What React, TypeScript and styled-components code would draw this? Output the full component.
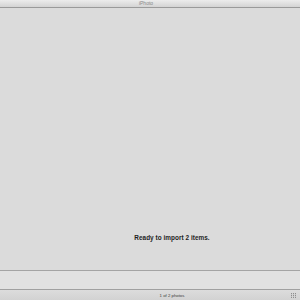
import React from 'react'
import styled, { createGlobalStyle } from 'styled-components'

const Global = createGlobalStyle`
  html, body { margin: 0; padding: 0; }
  body { width: 300px; height: 300px; overflow: hidden; font-family: "Liberation Sans", Arial, sans-serif; }
`

const Window = styled.div`
  width: 300px;
  height: 300px;
  display: flex;
  flex-direction: column;
  background: #dadada;
`

const TitleBar = styled.div`
  height: 7px;
  flex: none;
  display: flex;
  align-items: center;
  justify-content: center;
  padding-right: 8px;
  background: linear-gradient(#ececec, #d4d4d4);
  border-bottom: 1px solid #9a9a9a;
  font-size: 5px;
  color: #8a8a8a;
  line-height: 7px;
`

const Content = styled.div`
  flex: 1;
  display: flex;
  flex-direction: column;
  justify-content: flex-end;
  align-items: center;
  padding: 0 0 29px 44px;
  background: #dbdbdb;
  border-bottom: 1px solid #a4a4a4;
`

const Message = styled.div`
  font-size: 6.4px;
  font-weight: bold;
  color: #1e1e1e;
  letter-spacing: 0.05px;
`

const Band = styled.div`
  height: 18px;
  flex: none;
  background: #e1e1e1;
  border-bottom: 1px solid #a0a0a0;
`

const StatusBar = styled.div`
  height: 10px;
  flex: none;
  display: flex;
  align-items: center;
  justify-content: center;
  padding: 1px 0 0 44px;
  box-sizing: border-box;
  position: relative;
  background: linear-gradient(#dcdcdc, #d2d2d2);
  font-size: 4.3px;
  color: #3a3a3a;
`

const Grip = styled.div`
  position: absolute;
  right: 4px;
  bottom: 2px;
  width: 5px;
  height: 5px;
  background:
    repeating-linear-gradient(90deg, transparent 0 1px, #d6d6d6 1px 2px),
    repeating-linear-gradient(0deg, #8e8e8e 0 1px, #c4c4c4 1px 2px);
`

export default function App() {
  return (
    <>
      <Global />
      <Window>
        <TitleBar>iPhoto</TitleBar>
        <Content>
          <Message>Ready to import 2 items.</Message>
        </Content>
        <Band />
        <StatusBar>
          1 of 2 photos
          <Grip />
        </StatusBar>
      </Window>
    </>
  )
}
